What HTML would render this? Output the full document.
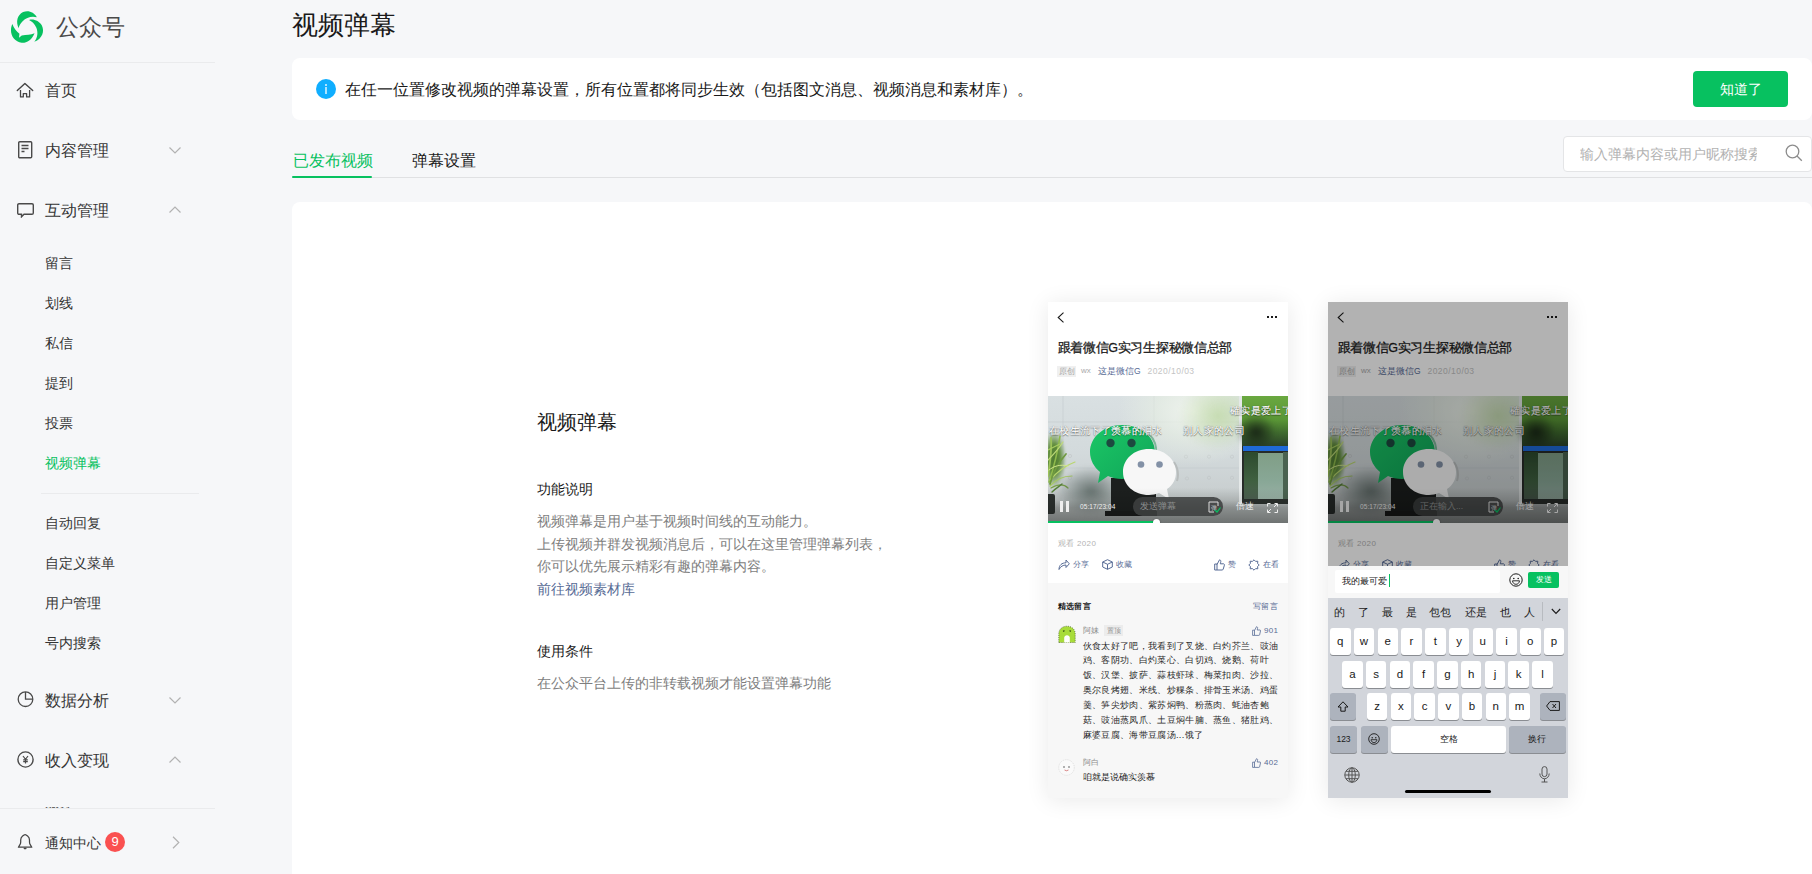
<!DOCTYPE html>
<html><head><meta charset="utf-8">
<style>
*{margin:0;padding:0;box-sizing:border-box}
html,body{width:1812px;height:874px;overflow:hidden;background:#f6f7f9;font-family:"Liberation Sans",sans-serif;color:#353535}
.abs{position:absolute}
.t{position:absolute;white-space:nowrap;line-height:1}
/* sidebar */
.logo{left:11px;top:11px;width:32px;height:32px}
.brand{left:56px;top:16px;font-size:23px;color:#4a4a4a}
.sep{position:absolute;height:1px;background:#eaebed}
.mi{position:absolute;margin-top:1px;left:45px;font-size:16px;color:#353535;line-height:1}
.si{position:absolute;margin-top:1px;left:45px;font-size:14px;color:#353535;line-height:1}
.ico{position:absolute}
.chev{position:absolute;left:169px;width:12px;height:7px}
/* main */
.title{left:292px;top:12px;font-size:26px;color:#1a1a1a}
.card{position:absolute;background:#fff;border-radius:8px}
.btn{position:absolute;left:1693px;top:71px;width:95px;height:36px;background:#07c160;border-radius:4px;color:#fff;font-size:14px;text-align:center;line-height:36px;font-weight:500}
.phone{position:absolute;width:240px;height:496px;overflow:hidden;box-shadow:0 2px 22px rgba(0,0,0,.09)}
.vid{position:absolute;left:0;top:0;width:240px;height:127px;overflow:hidden}
.dm{color:#fff;-webkit-text-stroke:.15px #fff;text-shadow:0 0 1px rgba(0,0,0,.75),0 .5px 1px rgba(0,0,0,.4)}
.cm{font-size:9.3px;letter-spacing:.31px;line-height:14.9px;color:#2a2a2a;white-space:nowrap}
.key{position:absolute;height:26.5px;border-radius:3px;box-shadow:0 1px 0 #8a8d92;color:#1a1a1a;text-align:center;line-height:26.5px;display:flex;align-items:center;justify-content:center}
</style></head><body>

<!-- sidebar -->
<svg class="abs" style="left:8px;top:8px" width="40" height="40" viewBox="0 0 874 874"><g fill="#07c160"><path d="M230,440 C170,300 200,160 330,90 C440,40 570,90 630,200 C520,170 400,200 320,290 C270,340 240,400 230,440 Z"/><path d="M460,260 C560,230 680,280 740,380 C800,500 760,660 575,740 C650,640 660,540 620,430 C580,340 520,290 460,260 Z"/><path d="M95,350 C130,440 180,510 250,560 L240,650 L300,600 C400,580 500,590 580,550 C520,700 400,770 300,760 C160,740 60,620 65,480 C65,430 80,380 95,350 Z"/></g></svg>
<div class="t brand">公众号</div>
<div class="sep" style="left:0;top:62px;width:215px"></div>

<svg class="ico" style="left:16px;top:82px" width="18" height="17" viewBox="0 0 18 17"><path d="M1.3 8.6 L8.9 1.5 L16.7 8.6" fill="none" stroke="#454545" stroke-width="1.4" stroke-linejoin="round" stroke-linecap="round"/><path d="M4.5 8 V14.9 H7.3 V11.6 H10.6 V14.9 H13.6 V8" fill="none" stroke="#454545" stroke-width="1.3" stroke-linejoin="round"/></svg>
<div class="mi" style="top:82px">首页</div>

<svg class="ico" style="left:18px;top:141px" width="15" height="18" viewBox="0 0 15 18"><rect x="0.7" y="0.7" width="13" height="16" rx="1" fill="none" stroke="#4a4a4a" stroke-width="1.4"/><path d="M3.5 4.5H10.5M3.5 7.5H10.5M3.5 10.5H6.5" stroke="#4a4a4a" stroke-width="1.4"/></svg>
<div class="mi" style="top:142px">内容管理</div>
<svg class="chev" style="top:147px" viewBox="0 0 12 7"><path d="M0.5 0.5L6 6L11.5 0.5" fill="none" stroke="#b2b2b2" stroke-width="1.2"/></svg>

<svg class="ico" style="left:17px;top:203px" width="17" height="15" viewBox="0 0 17 15"><path d="M2 0.7H15A1.3 1.3 0 0 1 16.3 2V10A1.3 1.3 0 0 1 15 11.3H7L4.5 13.8V11.3H2A1.3 1.3 0 0 1 0.7 10V2A1.3 1.3 0 0 1 2 0.7Z" fill="none" stroke="#4a4a4a" stroke-width="1.4"/></svg>
<div class="mi" style="top:202px">互动管理</div>
<svg class="chev" style="top:206px" viewBox="0 0 12 7"><path d="M0.5 6.5L6 1L11.5 6.5" fill="none" stroke="#b2b2b2" stroke-width="1.2"/></svg>

<div class="si" style="top:255px">留言</div>
<div class="si" style="top:295px">划线</div>
<div class="si" style="top:335px">私信</div>
<div class="si" style="top:375px">提到</div>
<div class="si" style="top:415px">投票</div>
<div class="si" style="top:455px;color:#07c160">视频弹幕</div>
<div class="sep" style="left:41px;top:493px;width:158px;background:#eaebed"></div>
<div class="si" style="top:515px">自动回复</div>
<div class="si" style="top:555px">自定义菜单</div>
<div class="si" style="top:595px">用户管理</div>
<div class="si" style="top:635px">号内搜索</div>

<svg class="ico" style="left:17px;top:691px" width="17" height="17" viewBox="0 0 17 17"><circle cx="8.5" cy="8.2" r="7.3" fill="none" stroke="#4a4a4a" stroke-width="1.3"/><path d="M8.5 0.9V8.2H15.8" fill="none" stroke="#4a4a4a" stroke-width="1.3"/></svg>
<div class="mi" style="top:692px">数据分析</div>
<svg class="chev" style="top:697px" viewBox="0 0 12 7"><path d="M0.5 0.5L6 6L11.5 0.5" fill="none" stroke="#b2b2b2" stroke-width="1.2"/></svg>
<svg class="ico" style="left:17px;top:751px" width="17" height="17" viewBox="0 0 17 17"><circle cx="8.5" cy="8.5" r="7.6" fill="none" stroke="#4a4a4a" stroke-width="1.4"/><path d="M6 5L8.5 8.3L11 5M8.5 8.3V12.5M6.2 8.8H10.8M6.2 10.6H10.8" fill="none" stroke="#4a4a4a" stroke-width="1.2"/></svg>
<div class="mi" style="top:752px">收入变现</div>
<svg class="chev" style="top:756px" viewBox="0 0 12 7"><path d="M0.5 6.5L6 1L11.5 6.5" fill="none" stroke="#b2b2b2" stroke-width="1.2"/></svg>
<div class="abs" style="left:40px;top:806.5px;width:40px;height:1.5px;overflow:hidden"><div class="t" style="left:5px;top:-11.5px;font-size:14px;color:#555">服务</div></div>
<div class="sep" style="left:0;top:808px;width:215px"></div>
<svg class="ico" style="left:17px;top:834px" width="17" height="17" viewBox="0 0 17 17"><path d="M1.4 13.2L3.1 10.4Q3.7 9.4 3.7 8V5.9Q3.7 3.6 5.6 2.1L7.1 1Q8.1 0.3 9.1 1L10.6 2.1Q12.5 3.6 12.5 5.9V8Q12.5 9.4 13.1 10.4L14.8 13.2Z" fill="none" stroke="#454545" stroke-width="1.25" stroke-linejoin="round"/><path d="M7.4 14.5H8.8" stroke="#454545" stroke-width="1.6" stroke-linecap="round"/></svg>
<div class="si" style="top:835px">通知中心</div>
<div class="abs" style="left:105px;top:832px;width:20px;height:20px;border-radius:10px;background:#fa5151;color:#fff;font-size:13px;text-align:center;line-height:20px">9</div>
<svg class="abs" style="left:172px;top:836px" width="8" height="13" viewBox="0 0 8 13"><path d="M1 0.8L6.8 6.5L1 12.2" fill="none" stroke="#b2b2b2" stroke-width="1.2"/></svg>

<!-- main -->
<div class="t title">视频弹幕</div>
<div class="card" style="left:292px;top:58px;width:1520px;height:62px"></div>
<div class="abs" style="left:316px;top:79px;width:20px;height:20px;border-radius:10px;background:#10aeff"></div>
<div class="abs" style="left:324.7px;top:84px;width:2px;height:1.8px;background:#fff;opacity:.65"></div>
<div class="abs" style="left:324.7px;top:87.2px;width:2px;height:6.8px;background:#fff;opacity:.65"></div>
<div class="t" style="left:345px;top:82px;font-size:16px;color:#1a1a1a">在任一位置修改视频的弹幕设置，所有位置都将同步生效（包括图文消息、视频消息和素材库）。</div>
<div class="btn">知道了</div>

<div class="t" style="left:293px;top:153px;font-size:16px;color:#07c160">已发布视频</div>
<div class="t" style="left:412px;top:153px;font-size:16px;color:#1a1a1a">弹幕设置</div>
<div class="abs" style="left:292px;top:177px;width:1520px;height:1px;background:#e0e1e3"></div>
<div class="abs" style="left:292px;top:175.5px;width:80px;height:2.5px;background:#07c160;border-radius:1px"></div>

<div class="abs" style="left:1563px;top:136px;width:249px;height:36px;border:1px solid #e4e5e7;border-radius:4px;background:#fff;overflow:hidden"></div>
<div class="abs" style="left:1580px;top:144px;width:177px;height:20px;overflow:hidden"><div class="t" style="left:0;top:3px;font-size:14px;color:#b2b2b2">输入弹幕内容或用户昵称搜索</div></div>
<svg class="abs" style="left:1784.5px;top:143.5px" width="18" height="18" viewBox="0 0 18 18"><circle cx="7.5" cy="7.5" r="6.3" fill="none" stroke="#8c8c8c" stroke-width="1.3"/><path d="M12 12L16.8 16.8" stroke="#8c8c8c" stroke-width="1.3"/></svg>

<div class="card" style="left:292px;top:202px;width:1520px;height:700px"></div>

<div class="t" style="left:537px;top:412px;font-size:20px;color:#1a1a1a">视频弹幕</div>
<div class="t" style="left:537px;top:482px;font-size:14px;color:#1a1a1a">功能说明</div>
<div class="abs" style="left:537px;top:510px;font-size:14px;line-height:22.5px;color:#7e7e7e;white-space:nowrap">视频弹幕是用户基于视频时间线的互动能力。<br>上传视频并群发视频消息后，可以在这里管理弹幕列表，<br>你可以优先展示精彩有趣的弹幕内容。<br><span style="color:#576b95">前往视频素材库</span></div>
<div class="t" style="left:537px;top:644px;font-size:14px;color:#1a1a1a">使用条件</div>
<div class="t" style="left:537px;top:676px;font-size:14px;color:#7e7e7e">在公众平台上传的非转载视频才能设置弹幕功能</div>


<!--PHONES--><div class="phone" style="left:1048px;top:302px">
 <div class="abs" style="left:0;top:0;width:240px;height:281px;background:#fff"></div>
 <div class="abs" style="left:0;top:281px;width:240px;height:215px;background:#f7f7f7"></div>
 <svg class="abs" style="left:9px;top:9.5px" width="8" height="11" viewBox="0 0 8 11"><path d="M6.5 0.7L1.2 5.5L6.5 10.3" fill="none" stroke="#1a1a1a" stroke-width="1.1"/></svg>
 <div class="abs" style="left:219px;top:14px;width:2px;height:2px;background:#1a1a1a;box-shadow:4px 0 0 #1a1a1a,8px 0 0 #1a1a1a"></div>
 <div class="t" style="left:9.5px;top:39.5px;font-size:12.5px;color:#1a1a1a;letter-spacing:-.3px;-webkit-text-stroke:.3px #1a1a1a">跟着微信G实习生探秘微信总部</div>
 <div class="abs" style="left:9px;top:64px;width:19px;height:10.5px;background:#f0f0f0"></div>
 <div class="t" style="left:11px;top:65.5px;font-size:7.5px;color:#a8a8a8">原创</div>
 <div class="t" style="left:33px;top:65px;font-size:8px;color:#aaaaaa">wx</div>
 <div class="t" style="left:50px;top:64.5px;font-size:8.5px;color:#576b95">这是微信G</div>
 <div class="t" style="left:99.5px;top:65px;font-size:8.5px;color:#c4c4c4;letter-spacing:.45px">2020/10/03</div>
 <div class="abs" style="left:0;top:94px"><div class="vid">
 <div class="abs" style="left:0;top:0;width:240px;height:127px;background:linear-gradient(180deg,#d9e0e2 0%,#d3dadc 45%,#cad0d1 72%,#bcc2c2 82%,#9ea3a2 88%,#8e9392 100%)"></div>
 <svg class="abs" style="left:0;top:0" width="240" height="127" viewBox="0 0 240 127"><path d="M15 0V105M106 0V105M0 72H191M0 26H191" stroke="#c3cacc" stroke-width=".6"/><circle cx="138" cy="38" r="1.6" fill="none" stroke="#c0c5c6" stroke-width=".6"/><circle cx="161" cy="38" r="1.6" fill="none" stroke="#c0c5c6" stroke-width=".6"/><circle cx="184" cy="38" r="1.6" fill="none" stroke="#c0c5c6" stroke-width=".6"/><circle cx="138" cy="60.7" r="1.6" fill="none" stroke="#c0c5c6" stroke-width=".6"/><circle cx="161" cy="60.7" r="1.6" fill="none" stroke="#c0c5c6" stroke-width=".6"/><circle cx="184" cy="60.7" r="1.6" fill="none" stroke="#c0c5c6" stroke-width=".6"/><circle cx="139" cy="82.5" r="1.6" fill="none" stroke="#c0c5c6" stroke-width=".6"/><circle cx="161" cy="81.8" r="1.6" fill="none" stroke="#c0c5c6" stroke-width=".6"/><circle cx="184" cy="81.8" r="1.6" fill="none" stroke="#c0c5c6" stroke-width=".6"/><circle cx="22" cy="60" r="1.6" fill="none" stroke="#c0c5c6" stroke-width=".6"/><circle cx="22" cy="82" r="1.6" fill="none" stroke="#c0c5c6" stroke-width=".6"/></svg>
 <div class="abs" style="left:70px;top:-40px;width:150px;height:110px;border-radius:50%;background:radial-gradient(closest-side,rgba(240,245,238,.95),rgba(232,240,228,.6) 50%,rgba(225,235,220,0));"></div>
 <div class="abs" style="left:130px;top:-15px;width:80px;height:70px;border-radius:50%;background:radial-gradient(closest-side,rgba(160,200,115,.45),rgba(160,200,115,0));filter:blur(2px)"></div>
 <div class="abs" style="left:191px;top:0;width:3px;height:108px;background:#e4e8e8"></div>
 <div class="abs" style="left:194px;top:0;width:46px;height:108px;background:linear-gradient(180deg,#6aa840 0%,#5a9636 22%,#3f6a2e 34%,#2f4a2a 44%,#2a352e 52%,#3a4a40 100%)"></div>
 <div class="abs" style="left:188px;top:18px;width:40px;height:36px;border-radius:50%;background:radial-gradient(closest-side,rgba(18,26,18,.85),rgba(18,26,18,0));filter:blur(2px)"></div>
 <div class="abs" style="left:194px;top:50px;width:46px;height:58px;background:#272c29"></div><div class="abs" style="left:195px;top:49.5px;width:45px;height:5.5px;background:#1f6ad8"></div>
 <div class="abs" style="left:196px;top:56px;width:14px;height:48px;background:linear-gradient(180deg,#2c4a2e,#3f6040 60%,#4d6052)"></div>
 <div class="abs" style="left:210px;top:57px;width:25px;height:46px;background:linear-gradient(180deg,#809e86,#88a796 60%,#98b0a4)"></div>
 <div class="abs" style="left:235px;top:56px;width:5px;height:48px;background:#4a6250"></div>
 <div class="abs" style="left:194px;top:103px;width:46px;height:5px;background:#2b302d"></div>
 <div class="abs" style="left:-6px;top:34px;width:24px;height:58px;border-radius:50%;background:radial-gradient(closest-side,#4f7a34 0%,#5f8c3a 50%,rgba(90,130,60,0) 100%);filter:blur(1px)"></div>
 <svg class="abs" style="left:0;top:34px;filter:blur(.35px)" width="32" height="66" viewBox="0 0 32 66"><g fill="none" stroke-linecap="round"><path d="M1 52C5 40 9 26 12 6" stroke="#8fba4c" stroke-width="1.6"/><path d="M2 50C9 42 16 36 27 32" stroke="#b9d66e" stroke-width="1.2"/><path d="M2 56C9 48 16 46 24 46" stroke="#a9cc60" stroke-width="1.2"/><path d="M0 46C2 34 4 22 3 8" stroke="#9cc25a" stroke-width="1.8"/><path d="M3 58C10 54 16 54 20 58" stroke="#7aa248" stroke-width="1.2"/><path d="M0 30C6 24 10 20 15 12" stroke="#c0da7a" stroke-width="1.2"/><path d="M2 54C5 42 9 34 18 24" stroke="#6f9a40" stroke-width="1.8"/><path d="M0 20C4 18 8 16 12 14" stroke="#a8cb62" stroke-width="1.2"/><path d="M1 40C6 36 12 34 20 36" stroke="#d2e68c" stroke-width="1"/><path d="M4 62C8 58 12 56 14 54" stroke="#557f38" stroke-width="1.4"/></g></svg>
 <div class="abs" style="left:8px;top:70px;width:70px;height:50px;border-radius:50%;background:radial-gradient(closest-side,rgba(70,84,80,.75),rgba(70,84,80,0));filter:blur(2px)"></div>
 <div class="abs" style="left:0;top:98px;width:7px;height:20px;background:#2b302e;border-radius:0 2px 2px 0"></div>
 <div class="abs" style="left:63px;top:82px;width:45px;height:37px;background:#1c1f1e"></div>
 <div class="abs" style="left:57px;top:115px;width:52px;height:5px;background:#1a1c1b"></div>
 <svg class="abs" style="left:41px;top:28px" width="70" height="60" viewBox="0 0 70 60"><defs><linearGradient id="gg" x1="0" y1="0" x2="1" y2="1"><stop offset="0" stop-color="#1cc766"/><stop offset="1" stop-color="#0fa458"/></linearGradient></defs><path d="M33 1C52 1 66 13 66 28C66 43 52 55 33 55C28 55 23 54 19 52L9 59L11 48C5 43 1 36 1 28C1 13 15 1 33 1Z" fill="url(#gg)"/><path d="M60 10C66 16 68 22 67 30" stroke="#7fb59a" stroke-width="2" fill="none"/><circle cx="21.5" cy="19" r="4.2" fill="#1d4a40"/><circle cx="42.5" cy="19" r="4.2" fill="#1d4a40"/></svg>
 <svg class="abs" style="left:74px;top:52px" width="58" height="52" viewBox="0 0 58 52"><path d="M27 1C42 1 54 11 54 24C54 31 51 37 45 41L47 51L37 45C34 46 30 47 27 47C12 47 1 37 1 24C1 11 12 1 27 1Z" fill="#f7f7f7"/><path d="M52 14C56 20 57 26 55 33" stroke="#b8bcbc" stroke-width="2" fill="none"/><circle cx="19" cy="16.5" r="3.3" fill="#8391a6"/><circle cx="37.5" cy="16.5" r="3.3" fill="#8391a6"/></svg>
 <div class="abs" style="left:0;top:92px;width:240px;height:35px;background:linear-gradient(180deg,rgba(0,0,0,0),rgba(0,0,0,.22))"></div>
 <div class="t dm" style="left:1px;top:29.5px;font-size:10px;letter-spacing:.35px">在校生流下了羡慕的泪水</div>
 <div class="t dm" style="left:135px;top:29.5px;font-size:10px;letter-spacing:.35px">别人家的公司</div>
 <div class="t dm" style="left:182px;top:10px;font-size:10px;letter-spacing:.35px">確实是爱上了</div>
 <div class="abs" style="left:12px;top:105px;width:2.8px;height:10.5px;background:#eee"></div>
 <div class="abs" style="left:18.3px;top:105px;width:2.8px;height:10.5px;background:#eee"></div>
 <div class="t" style="left:32px;top:107.5px;font-size:6.5px;color:#eee;letter-spacing:.1px">05:17/23:04</div>
 <div class="abs" style="left:85px;top:101px;width:90px;height:19px;border-radius:10px;background:rgba(62,64,64,.88)"></div>
 <div class="t" style="left:92px;top:106px;font-size:8.5px;color:#8e9090">发送弹幕</div>
 <svg class="abs" style="left:160px;top:105px" width="13" height="12" viewBox="0 0 13 12"><path d="M1 1H10V5M1 1V11H6" fill="none" stroke="#ddd" stroke-width="1"/><text x="2.5" y="8.5" font-size="6" fill="#ddd">弹</text><path d="M7 9L9 11L12.5 6.5" fill="none" stroke="#07c160" stroke-width="1.2"/></svg>
 <div class="t" style="left:187.5px;top:106px;font-size:8.5px;color:#eee">倍速</div>
 <svg class="abs" style="left:218.5px;top:106.5px" width="11" height="10" viewBox="0 0 11 10"><path d="M0.5 3.5V0.5H3.5M7.5 0.5H10.5V3.5M10.5 6.5V9.5H7.5M3.5 9.5H0.5V6.5M1 9L4 6M10 1L7 4" fill="none" stroke="#eee" stroke-width="1"/></svg>
 <div class="abs" style="left:0;top:125px;width:108px;height:1.8px;background:#07c160"></div>
 <div class="abs" style="left:104.5px;top:122.5px;width:7px;height:7px;border-radius:50%;background:#fff;box-shadow:0 0 2px rgba(0,0,0,.3)"></div>
</div></div>
 <div class="t" style="left:9.5px;top:237.7px;font-size:8px;color:#b4b4b4;letter-spacing:.4px">观看 2020</div>
 <svg class="abs" style="left:10px;top:257.2px" width="12" height="11" viewBox="0 0 12 11"><path d="M1 10.5C1 6 4 3.8 8 3.8V1L11.3 4.8L8 8.5V6C5 6 2.5 7.5 1 10.5Z" fill="none" stroke="#576b95" stroke-width="1"/></svg>
 <div class="t" style="left:25px;top:258.7px;font-size:8px;color:#576b95">分享</div>
 <svg class="abs" style="left:53.5px;top:257.2px" width="11" height="11" viewBox="0 0 11 11"><path d="M5.5 0.7L10.3 3V8L5.5 10.3L0.7 8V3Z M0.7 3L5.5 5.3L10.3 3 M5.5 5.3V10.3" fill="none" stroke="#576b95" stroke-width="1"/></svg>
 <div class="t" style="left:67.5px;top:258.7px;font-size:8px;color:#576b95">收藏</div>
 <svg class="abs" style="left:166px;top:256.7px" width="11" height="12" viewBox="0 0 11 12"><path d="M0.7 5H3V11H0.7Z M3 5.5L5.5 0.8C6.8 1 7 2 6.7 3.2L6.3 4.8H9.5C10.2 4.8 10.6 5.5 10.4 6.2L9.2 10.2C9 10.8 8.6 11 8 11H3" fill="none" stroke="#576b95" stroke-width="1"/></svg>
 <div class="t" style="left:180px;top:258.7px;font-size:8px;color:#576b95">赞</div>
 <svg class="abs" style="left:200px;top:256.7px" width="12" height="12" viewBox="0 0 12 12"><path d="M6 0.8L7.6 2.4L9.8 2.2L9.6 4.4L11.2 6L9.6 7.6L9.8 9.8L7.6 9.6L6 11.2L4.4 9.6L2.2 9.8L2.4 7.6L0.8 6L2.4 4.4L2.2 2.2L4.4 2.4Z" fill="none" stroke="#576b95" stroke-width="1"/></svg>
 <div class="t" style="left:215px;top:258.7px;font-size:8px;color:#576b95">在看</div>
 <div class="t" style="left:9.5px;top:301px;font-size:8px;font-weight:bold;color:#1a1a1a;letter-spacing:.4px">精选留言</div>
 <div class="t" style="left:205px;top:301px;font-size:8px;color:#576b95;letter-spacing:.4px">写留言</div>
 <svg class="abs" style="left:9.5px;top:323px" width="18" height="18" viewBox="0 0 18 18"><path d="M0.8 17.5V9C0.8 4 4.5 1.2 9 1.2C13.5 1.2 17.2 4 17.2 9V17.5Z" fill="#a8dc3a" stroke="#2a3a10" stroke-width=".6" stroke-dasharray="1 1.2"/><path d="M5 6.3L6.5 5.8M11.5 5.8L13 6.3" stroke="#1a2a0a" stroke-width="1.1"/><path d="M6.2 17.5V12.8C6.2 11.3 7.5 10.3 9 10.3C10.5 10.3 11.8 11.3 11.8 12.8V17.5Z" fill="#fff"/></svg>
 <div class="t" style="left:35px;top:325px;font-size:8px;color:#8a8a8a">阿妹</div>
 <div class="abs" style="left:55.8px;top:323px;width:19px;height:11px;background:#ececec"></div>
 <div class="t" style="left:58.5px;top:325px;font-size:7px;color:#8e8e8e">置顶</div>
 <svg class="abs" style="left:204px;top:324px" width="9" height="10" viewBox="0 0 9 10"><path d="M0.6 4.2H2.5V9.4H0.6Z M2.5 4.5L4.5 0.7C5.6 0.9 5.8 1.6 5.5 2.6L5.2 4H8C8.5 4 8.7 4.5 8.5 5L7.6 8.8C7.5 9.2 7.2 9.4 6.8 9.4H2.5" fill="none" stroke="#576b95" stroke-width=".8"/></svg>
 <div class="t" style="left:216px;top:325px;font-size:8px;color:#576b95;letter-spacing:.3px">901</div>
 <div class="abs cm" style="left:34.8px;top:336.5px">伙食太好了吧，我看到了叉烧、白灼芥兰、豉油<br>鸡、客阴功、白灼菜心、白切鸡、烧鹅、荷叶<br>饭、汉堡、披萨、蒜枝虾球、梅菜扣肉、沙拉、<br>奥尔良烤翅、米线、炒粿条、排骨玉米汤、鸡蛋<br>羹、笋尖炒肉、紫苏焖鸭、粉蒸肉、蚝油杏鲍<br>菇、豉油蒸凤爪、土豆焖牛腩、蒸鱼、猪肚鸡、<br>麻婆豆腐、海带豆腐汤...饿了</div>
 <svg class="abs" style="left:10px;top:455.5px" width="17" height="19" viewBox="0 0 17 19"><circle cx="8.5" cy="9.5" r="7.8" fill="#fafafa" stroke="#d0d0d0" stroke-width=".6" stroke-dasharray="1.2 1"/><circle cx="6" cy="9" r=".8" fill="#555"/><circle cx="11" cy="9" r=".8" fill="#555"/><path d="M6.5 12Q8.5 13.5 10.5 12" stroke="#c55" stroke-width=".7" fill="none"/></svg>
 <div class="t" style="left:35px;top:457px;font-size:8px;color:#8a8a8a">阿白</div>
 <svg class="abs" style="left:204px;top:456px" width="9" height="10" viewBox="0 0 9 10"><path d="M0.6 4.2H2.5V9.4H0.6Z M2.5 4.5L4.5 0.7C5.6 0.9 5.8 1.6 5.5 2.6L5.2 4H8C8.5 4 8.7 4.5 8.5 5L7.6 8.8C7.5 9.2 7.2 9.4 6.8 9.4H2.5" fill="none" stroke="#576b95" stroke-width=".8"/></svg>
 <div class="t" style="left:216px;top:457px;font-size:8px;color:#576b95;letter-spacing:.3px">402</div>
 <div class="t" style="left:34.8px;top:471px;font-size:9.3px;color:#1a1a1a">咱就是说确实羡慕</div>
</div>
<div class="phone" style="left:1328px;top:302px">
 <div class="abs" style="left:0;top:0;width:240px;height:281px;background:#fff"></div>
 <div class="abs" style="left:0;top:281px;width:240px;height:215px;background:#f7f7f7"></div>
 <svg class="abs" style="left:9px;top:9.5px" width="8" height="11" viewBox="0 0 8 11"><path d="M6.5 0.7L1.2 5.5L6.5 10.3" fill="none" stroke="#1a1a1a" stroke-width="1.1"/></svg>
 <div class="abs" style="left:219px;top:14px;width:2px;height:2px;background:#1a1a1a;box-shadow:4px 0 0 #1a1a1a,8px 0 0 #1a1a1a"></div>
 <div class="t" style="left:9.5px;top:39.5px;font-size:12.5px;color:#1a1a1a;letter-spacing:-.3px;-webkit-text-stroke:.3px #1a1a1a">跟着微信G实习生探秘微信总部</div>
 <div class="abs" style="left:9px;top:64px;width:19px;height:10.5px;background:#f0f0f0"></div>
 <div class="t" style="left:11px;top:65.5px;font-size:7.5px;color:#a8a8a8">原创</div>
 <div class="t" style="left:33px;top:65px;font-size:8px;color:#aaaaaa">wx</div>
 <div class="t" style="left:50px;top:64.5px;font-size:8.5px;color:#576b95">这是微信G</div>
 <div class="t" style="left:99.5px;top:65px;font-size:8.5px;color:#c4c4c4;letter-spacing:.45px">2020/10/03</div>
 <div class="abs" style="left:0;top:94px"><div class="vid">
 <div class="abs" style="left:0;top:0;width:240px;height:127px;background:linear-gradient(180deg,#d9e0e2 0%,#d3dadc 45%,#cad0d1 72%,#bcc2c2 82%,#9ea3a2 88%,#8e9392 100%)"></div>
 <svg class="abs" style="left:0;top:0" width="240" height="127" viewBox="0 0 240 127"><path d="M15 0V105M106 0V105M0 72H191M0 26H191" stroke="#c3cacc" stroke-width=".6"/><circle cx="138" cy="38" r="1.6" fill="none" stroke="#c0c5c6" stroke-width=".6"/><circle cx="161" cy="38" r="1.6" fill="none" stroke="#c0c5c6" stroke-width=".6"/><circle cx="184" cy="38" r="1.6" fill="none" stroke="#c0c5c6" stroke-width=".6"/><circle cx="138" cy="60.7" r="1.6" fill="none" stroke="#c0c5c6" stroke-width=".6"/><circle cx="161" cy="60.7" r="1.6" fill="none" stroke="#c0c5c6" stroke-width=".6"/><circle cx="184" cy="60.7" r="1.6" fill="none" stroke="#c0c5c6" stroke-width=".6"/><circle cx="139" cy="82.5" r="1.6" fill="none" stroke="#c0c5c6" stroke-width=".6"/><circle cx="161" cy="81.8" r="1.6" fill="none" stroke="#c0c5c6" stroke-width=".6"/><circle cx="184" cy="81.8" r="1.6" fill="none" stroke="#c0c5c6" stroke-width=".6"/><circle cx="22" cy="60" r="1.6" fill="none" stroke="#c0c5c6" stroke-width=".6"/><circle cx="22" cy="82" r="1.6" fill="none" stroke="#c0c5c6" stroke-width=".6"/></svg>
 <div class="abs" style="left:70px;top:-40px;width:150px;height:110px;border-radius:50%;background:radial-gradient(closest-side,rgba(240,245,238,.95),rgba(232,240,228,.6) 50%,rgba(225,235,220,0));"></div>
 <div class="abs" style="left:130px;top:-15px;width:80px;height:70px;border-radius:50%;background:radial-gradient(closest-side,rgba(160,200,115,.45),rgba(160,200,115,0));filter:blur(2px)"></div>
 <div class="abs" style="left:191px;top:0;width:3px;height:108px;background:#e4e8e8"></div>
 <div class="abs" style="left:194px;top:0;width:46px;height:108px;background:linear-gradient(180deg,#6aa840 0%,#5a9636 22%,#3f6a2e 34%,#2f4a2a 44%,#2a352e 52%,#3a4a40 100%)"></div>
 <div class="abs" style="left:188px;top:18px;width:40px;height:36px;border-radius:50%;background:radial-gradient(closest-side,rgba(18,26,18,.85),rgba(18,26,18,0));filter:blur(2px)"></div>
 <div class="abs" style="left:194px;top:50px;width:46px;height:58px;background:#272c29"></div><div class="abs" style="left:195px;top:49.5px;width:45px;height:5.5px;background:#1f6ad8"></div>
 <div class="abs" style="left:196px;top:56px;width:14px;height:48px;background:linear-gradient(180deg,#2c4a2e,#3f6040 60%,#4d6052)"></div>
 <div class="abs" style="left:210px;top:57px;width:25px;height:46px;background:linear-gradient(180deg,#809e86,#88a796 60%,#98b0a4)"></div>
 <div class="abs" style="left:235px;top:56px;width:5px;height:48px;background:#4a6250"></div>
 <div class="abs" style="left:194px;top:103px;width:46px;height:5px;background:#2b302d"></div>
 <div class="abs" style="left:-6px;top:34px;width:24px;height:58px;border-radius:50%;background:radial-gradient(closest-side,#4f7a34 0%,#5f8c3a 50%,rgba(90,130,60,0) 100%);filter:blur(1px)"></div>
 <svg class="abs" style="left:0;top:34px;filter:blur(.35px)" width="32" height="66" viewBox="0 0 32 66"><g fill="none" stroke-linecap="round"><path d="M1 52C5 40 9 26 12 6" stroke="#8fba4c" stroke-width="1.6"/><path d="M2 50C9 42 16 36 27 32" stroke="#b9d66e" stroke-width="1.2"/><path d="M2 56C9 48 16 46 24 46" stroke="#a9cc60" stroke-width="1.2"/><path d="M0 46C2 34 4 22 3 8" stroke="#9cc25a" stroke-width="1.8"/><path d="M3 58C10 54 16 54 20 58" stroke="#7aa248" stroke-width="1.2"/><path d="M0 30C6 24 10 20 15 12" stroke="#c0da7a" stroke-width="1.2"/><path d="M2 54C5 42 9 34 18 24" stroke="#6f9a40" stroke-width="1.8"/><path d="M0 20C4 18 8 16 12 14" stroke="#a8cb62" stroke-width="1.2"/><path d="M1 40C6 36 12 34 20 36" stroke="#d2e68c" stroke-width="1"/><path d="M4 62C8 58 12 56 14 54" stroke="#557f38" stroke-width="1.4"/></g></svg>
 <div class="abs" style="left:8px;top:70px;width:70px;height:50px;border-radius:50%;background:radial-gradient(closest-side,rgba(70,84,80,.75),rgba(70,84,80,0));filter:blur(2px)"></div>
 <div class="abs" style="left:0;top:98px;width:7px;height:20px;background:#2b302e;border-radius:0 2px 2px 0"></div>
 <div class="abs" style="left:63px;top:82px;width:45px;height:37px;background:#1c1f1e"></div>
 <div class="abs" style="left:57px;top:115px;width:52px;height:5px;background:#1a1c1b"></div>
 <svg class="abs" style="left:41px;top:28px" width="70" height="60" viewBox="0 0 70 60"><defs><linearGradient id="gg" x1="0" y1="0" x2="1" y2="1"><stop offset="0" stop-color="#1cc766"/><stop offset="1" stop-color="#0fa458"/></linearGradient></defs><path d="M33 1C52 1 66 13 66 28C66 43 52 55 33 55C28 55 23 54 19 52L9 59L11 48C5 43 1 36 1 28C1 13 15 1 33 1Z" fill="url(#gg)"/><path d="M60 10C66 16 68 22 67 30" stroke="#7fb59a" stroke-width="2" fill="none"/><circle cx="21.5" cy="19" r="4.2" fill="#1d4a40"/><circle cx="42.5" cy="19" r="4.2" fill="#1d4a40"/></svg>
 <svg class="abs" style="left:74px;top:52px" width="58" height="52" viewBox="0 0 58 52"><path d="M27 1C42 1 54 11 54 24C54 31 51 37 45 41L47 51L37 45C34 46 30 47 27 47C12 47 1 37 1 24C1 11 12 1 27 1Z" fill="#f7f7f7"/><path d="M52 14C56 20 57 26 55 33" stroke="#b8bcbc" stroke-width="2" fill="none"/><circle cx="19" cy="16.5" r="3.3" fill="#8391a6"/><circle cx="37.5" cy="16.5" r="3.3" fill="#8391a6"/></svg>
 <div class="abs" style="left:0;top:92px;width:240px;height:35px;background:linear-gradient(180deg,rgba(0,0,0,0),rgba(0,0,0,.22))"></div>
 <div class="t dm" style="left:1px;top:29.5px;font-size:10px;letter-spacing:.35px">在校生流下了羡慕的泪水</div>
 <div class="t dm" style="left:135px;top:29.5px;font-size:10px;letter-spacing:.35px">别人家的公司</div>
 <div class="t dm" style="left:182px;top:10px;font-size:10px;letter-spacing:.35px">確实是爱上了</div>
 <div class="abs" style="left:12px;top:105px;width:2.8px;height:10.5px;background:#eee"></div>
 <div class="abs" style="left:18.3px;top:105px;width:2.8px;height:10.5px;background:#eee"></div>
 <div class="t" style="left:32px;top:107.5px;font-size:6.5px;color:#eee;letter-spacing:.1px">05:17/23:04</div>
 <div class="abs" style="left:85px;top:101px;width:90px;height:19px;border-radius:10px;background:rgba(62,64,64,.88)"></div>
 <div class="t" style="left:92px;top:106px;font-size:8.5px;color:#8e9090">正在输入...</div>
 <svg class="abs" style="left:160px;top:105px" width="13" height="12" viewBox="0 0 13 12"><path d="M1 1H10V5M1 1V11H6" fill="none" stroke="#ddd" stroke-width="1"/><text x="2.5" y="8.5" font-size="6" fill="#ddd">弹</text><path d="M7 9L9 11L12.5 6.5" fill="none" stroke="#07c160" stroke-width="1.2"/></svg>
 <div class="t" style="left:187.5px;top:106px;font-size:8.5px;color:#eee">倍速</div>
 <svg class="abs" style="left:218.5px;top:106.5px" width="11" height="10" viewBox="0 0 11 10"><path d="M0.5 3.5V0.5H3.5M7.5 0.5H10.5V3.5M10.5 6.5V9.5H7.5M3.5 9.5H0.5V6.5M1 9L4 6M10 1L7 4" fill="none" stroke="#eee" stroke-width="1"/></svg>
 <div class="abs" style="left:0;top:125px;width:108px;height:1.8px;background:#07c160"></div>
 <div class="abs" style="left:104.5px;top:122.5px;width:7px;height:7px;border-radius:50%;background:#fff;box-shadow:0 0 2px rgba(0,0,0,.3)"></div>
</div></div>
 <div class="t" style="left:9.5px;top:237.7px;font-size:8px;color:#b4b4b4;letter-spacing:.4px">观看 2020</div>
 <svg class="abs" style="left:10px;top:257.2px" width="12" height="11" viewBox="0 0 12 11"><path d="M1 10.5C1 6 4 3.8 8 3.8V1L11.3 4.8L8 8.5V6C5 6 2.5 7.5 1 10.5Z" fill="none" stroke="#576b95" stroke-width="1"/></svg>
 <div class="t" style="left:25px;top:258.7px;font-size:8px;color:#576b95">分享</div>
 <svg class="abs" style="left:53.5px;top:257.2px" width="11" height="11" viewBox="0 0 11 11"><path d="M5.5 0.7L10.3 3V8L5.5 10.3L0.7 8V3Z M0.7 3L5.5 5.3L10.3 3 M5.5 5.3V10.3" fill="none" stroke="#576b95" stroke-width="1"/></svg>
 <div class="t" style="left:67.5px;top:258.7px;font-size:8px;color:#576b95">收藏</div>
 <svg class="abs" style="left:166px;top:256.7px" width="11" height="12" viewBox="0 0 11 12"><path d="M0.7 5H3V11H0.7Z M3 5.5L5.5 0.8C6.8 1 7 2 6.7 3.2L6.3 4.8H9.5C10.2 4.8 10.6 5.5 10.4 6.2L9.2 10.2C9 10.8 8.6 11 8 11H3" fill="none" stroke="#576b95" stroke-width="1"/></svg>
 <div class="t" style="left:180px;top:258.7px;font-size:8px;color:#576b95">赞</div>
 <svg class="abs" style="left:200px;top:256.7px" width="12" height="12" viewBox="0 0 12 12"><path d="M6 0.8L7.6 2.4L9.8 2.2L9.6 4.4L11.2 6L9.6 7.6L9.8 9.8L7.6 9.6L6 11.2L4.4 9.6L2.2 9.8L2.4 7.6L0.8 6L2.4 4.4L2.2 2.2L4.4 2.4Z" fill="none" stroke="#576b95" stroke-width="1"/></svg>
 <div class="t" style="left:215px;top:258.7px;font-size:8px;color:#576b95">在看</div>
 <div class="t" style="left:9.5px;top:301px;font-size:8px;font-weight:bold;color:#1a1a1a;letter-spacing:.4px">精选留言</div>
 <div class="t" style="left:205px;top:301px;font-size:8px;color:#576b95;letter-spacing:.4px">写留言</div>
 <svg class="abs" style="left:9.5px;top:323px" width="18" height="18" viewBox="0 0 18 18"><path d="M0.8 17.5V9C0.8 4 4.5 1.2 9 1.2C13.5 1.2 17.2 4 17.2 9V17.5Z" fill="#a8dc3a" stroke="#2a3a10" stroke-width=".6" stroke-dasharray="1 1.2"/><path d="M5 6.3L6.5 5.8M11.5 5.8L13 6.3" stroke="#1a2a0a" stroke-width="1.1"/><path d="M6.2 17.5V12.8C6.2 11.3 7.5 10.3 9 10.3C10.5 10.3 11.8 11.3 11.8 12.8V17.5Z" fill="#fff"/></svg>
 <div class="t" style="left:35px;top:325px;font-size:8px;color:#8a8a8a">阿妹</div>
 <div class="abs" style="left:55.8px;top:323px;width:19px;height:11px;background:#ececec"></div>
 <div class="t" style="left:58.5px;top:325px;font-size:7px;color:#8e8e8e">置顶</div>
 <svg class="abs" style="left:204px;top:324px" width="9" height="10" viewBox="0 0 9 10"><path d="M0.6 4.2H2.5V9.4H0.6Z M2.5 4.5L4.5 0.7C5.6 0.9 5.8 1.6 5.5 2.6L5.2 4H8C8.5 4 8.7 4.5 8.5 5L7.6 8.8C7.5 9.2 7.2 9.4 6.8 9.4H2.5" fill="none" stroke="#576b95" stroke-width=".8"/></svg>
 <div class="t" style="left:216px;top:325px;font-size:8px;color:#576b95;letter-spacing:.3px">901</div>
 <div class="abs cm" style="left:34.8px;top:336.5px">伙食太好了吧，我看到了叉烧、白灼芥兰、豉油<br>鸡、客阴功、白灼菜心、白切鸡、烧鹅、荷叶<br>饭、汉堡、披萨、蒜枝虾球、梅菜扣肉、沙拉、<br>奥尔良烤翅、米线、炒粿条、排骨玉米汤、鸡蛋<br>羹、笋尖炒肉、紫苏焖鸭、粉蒸肉、蚝油杏鲍<br>菇、豉油蒸凤爪、土豆焖牛腩、蒸鱼、猪肚鸡、<br>麻婆豆腐、海带豆腐汤...饿了</div>
 <svg class="abs" style="left:10px;top:455.5px" width="17" height="19" viewBox="0 0 17 19"><circle cx="8.5" cy="9.5" r="7.8" fill="#fafafa" stroke="#d0d0d0" stroke-width=".6" stroke-dasharray="1.2 1"/><circle cx="6" cy="9" r=".8" fill="#555"/><circle cx="11" cy="9" r=".8" fill="#555"/><path d="M6.5 12Q8.5 13.5 10.5 12" stroke="#c55" stroke-width=".7" fill="none"/></svg>
 <div class="t" style="left:35px;top:457px;font-size:8px;color:#8a8a8a">阿白</div>
 <svg class="abs" style="left:204px;top:456px" width="9" height="10" viewBox="0 0 9 10"><path d="M0.6 4.2H2.5V9.4H0.6Z M2.5 4.5L4.5 0.7C5.6 0.9 5.8 1.6 5.5 2.6L5.2 4H8C8.5 4 8.7 4.5 8.5 5L7.6 8.8C7.5 9.2 7.2 9.4 6.8 9.4H2.5" fill="none" stroke="#576b95" stroke-width=".8"/></svg>
 <div class="t" style="left:216px;top:457px;font-size:8px;color:#576b95;letter-spacing:.3px">402</div>
 <div class="t" style="left:34.8px;top:471px;font-size:9.3px;color:#1a1a1a">咱就是说确实羡慕</div>
<div class="abs" style="left:0;top:0;width:240px;height:264px;background:rgba(0,0,0,.3)"></div>
<div class="abs" style="left:0;top:264px;width:240px;height:31.5px;background:#f7f7f7"></div>
<div class="abs" style="left:6.8px;top:268px;width:165px;height:22.7px;background:#fff;border-radius:2px"></div>
<div class="t" style="left:13.5px;top:275px;font-size:9px;color:#1a1a1a;letter-spacing:.2px">我的最可爱</div>
<div class="abs" style="left:60.5px;top:272px;width:1.2px;height:13px;background:#07c160"></div>
<svg class="abs" style="left:180.5px;top:271px" width="14" height="14" viewBox="0 0 14 14"><circle cx="7" cy="7" r="6.2" fill="none" stroke="#1a1a1a" stroke-width="1"/><circle cx="4.8" cy="5.5" r=".8" fill="#1a1a1a"/><circle cx="9.2" cy="5.5" r=".8" fill="#1a1a1a"/><path d="M3.5 7.8H10.5C10.3 10 8.8 11.3 7 11.3C5.2 11.3 3.7 10 3.5 7.8Z" fill="none" stroke="#1a1a1a" stroke-width=".9"/></svg>
<div class="abs" style="left:200px;top:270px;width:31.2px;height:16px;background:#07c160;border-radius:2px;color:#fff;font-size:8px;line-height:16px;text-align:center">发送</div>
<div class="abs" style="left:0;top:295.5px;width:240px;height:200.5px;background:#d2d5db"></div>
<div class="t" style="left:6px;top:305px;font-size:10.5px;color:#1a1a1a">的</div>
<div class="t" style="left:30px;top:305px;font-size:10.5px;color:#1a1a1a">了</div>
<div class="t" style="left:53.7px;top:305px;font-size:10.5px;color:#1a1a1a">最</div>
<div class="t" style="left:77.5px;top:305px;font-size:10.5px;color:#1a1a1a">是</div>
<div class="t" style="left:101px;top:305px;font-size:10.5px;color:#1a1a1a">包包</div>
<div class="t" style="left:137px;top:305px;font-size:10.5px;color:#1a1a1a">还是</div>
<div class="t" style="left:172px;top:305px;font-size:10.5px;color:#1a1a1a">也</div>
<div class="t" style="left:195.8px;top:305px;font-size:10.5px;color:#1a1a1a">人</div>
<div class="abs" style="left:213.6px;top:299.6px;width:.8px;height:19.5px;background:#b8bbc0"></div>
<svg class="abs" style="left:222.5px;top:305.5px" width="10" height="7" viewBox="0 0 10 7"><path d="M0.8 1L5 5.5L9.2 1" fill="none" stroke="#1a1a1a" stroke-width="1.1"/></svg>
<div class="key" style="left:2.0px;top:326px;width:20.5px;background:#fff;font-size:11.5px">q</div>
<div class="key" style="left:25.75px;top:326px;width:20.5px;background:#fff;font-size:11.5px">w</div>
<div class="key" style="left:49.5px;top:326px;width:20.5px;background:#fff;font-size:11.5px">e</div>
<div class="key" style="left:73.25px;top:326px;width:20.5px;background:#fff;font-size:11.5px">r</div>
<div class="key" style="left:97.0px;top:326px;width:20.5px;background:#fff;font-size:11.5px">t</div>
<div class="key" style="left:120.75px;top:326px;width:20.5px;background:#fff;font-size:11.5px">y</div>
<div class="key" style="left:144.5px;top:326px;width:20.5px;background:#fff;font-size:11.5px">u</div>
<div class="key" style="left:168.25px;top:326px;width:20.5px;background:#fff;font-size:11.5px">i</div>
<div class="key" style="left:192.0px;top:326px;width:20.5px;background:#fff;font-size:11.5px">o</div>
<div class="key" style="left:215.75px;top:326px;width:20.5px;background:#fff;font-size:11.5px">p</div>
<div class="key" style="left:14.2px;top:359px;width:20.5px;background:#fff;font-size:11.5px">a</div>
<div class="key" style="left:37.95px;top:359px;width:20.5px;background:#fff;font-size:11.5px">s</div>
<div class="key" style="left:61.7px;top:359px;width:20.5px;background:#fff;font-size:11.5px">d</div>
<div class="key" style="left:85.45px;top:359px;width:20.5px;background:#fff;font-size:11.5px">f</div>
<div class="key" style="left:109.2px;top:359px;width:20.5px;background:#fff;font-size:11.5px">g</div>
<div class="key" style="left:132.95px;top:359px;width:20.5px;background:#fff;font-size:11.5px">h</div>
<div class="key" style="left:156.7px;top:359px;width:20.5px;background:#fff;font-size:11.5px">j</div>
<div class="key" style="left:180.45px;top:359px;width:20.5px;background:#fff;font-size:11.5px">k</div>
<div class="key" style="left:204.2px;top:359px;width:20.5px;background:#fff;font-size:11.5px">l</div>
<div class="key" style="left:2px;top:391px;width:26px;background:#adb3bd;font-size:11.5px"><svg width="12" height="11" viewBox="0 0 12 11"><path d="M6 0.8L11 6H8.2V10.2H3.8V6H1Z" fill="none" stroke="#1a1a1a" stroke-width="1"/></svg></div>
<div class="key" style="left:38.8px;top:391px;width:20.5px;background:#fff;font-size:11.5px">z</div>
<div class="key" style="left:62.55px;top:391px;width:20.5px;background:#fff;font-size:11.5px">x</div>
<div class="key" style="left:86.3px;top:391px;width:20.5px;background:#fff;font-size:11.5px">c</div>
<div class="key" style="left:110.05px;top:391px;width:20.5px;background:#fff;font-size:11.5px">v</div>
<div class="key" style="left:133.8px;top:391px;width:20.5px;background:#fff;font-size:11.5px">b</div>
<div class="key" style="left:157.55px;top:391px;width:20.5px;background:#fff;font-size:11.5px">n</div>
<div class="key" style="left:181.3px;top:391px;width:20.5px;background:#fff;font-size:11.5px">m</div>
<div class="key" style="left:212px;top:391px;width:25.7px;background:#adb3bd;font-size:11.5px"><svg width="14" height="10" viewBox="0 0 14 10"><path d="M4 0.6H13.4V9.4H4L0.6 5Z M6.5 3L10 7M10 3L6.5 7" fill="none" stroke="#1a1a1a" stroke-width="1"/></svg></div>
<div class="key" style="left:2px;top:424px;width:27px;background:#adb3bd;font-size:8.5px">123</div>
<div class="key" style="left:33px;top:424px;width:26.7px;background:#adb3bd;font-size:11.5px"><svg width="12" height="12" viewBox="0 0 12 12"><circle cx="6" cy="6" r="5.3" fill="none" stroke="#1a1a1a" stroke-width=".9"/><circle cx="4.2" cy="4.7" r=".7" fill="#1a1a1a"/><circle cx="7.8" cy="4.7" r=".7" fill="#1a1a1a"/><path d="M3 6.7H9C8.8 8.6 7.5 9.6 6 9.6C4.5 9.6 3.2 8.6 3 6.7Z" fill="none" stroke="#1a1a1a" stroke-width=".8"/></svg></div>
<div class="key" style="left:63px;top:424px;width:115px;background:#fff;font-size:8.5px">空格</div>
<div class="key" style="left:181px;top:424px;width:56.7px;background:#adb3bd;font-size:8.5px">换行</div>
<svg class="abs" style="left:16px;top:465px" width="16" height="16" viewBox="0 0 16 16"><circle cx="8" cy="8" r="7.2" fill="none" stroke="#555" stroke-width="1"/><ellipse cx="8" cy="8" rx="3.3" ry="7.2" fill="none" stroke="#555" stroke-width="1"/><path d="M0.8 8H15.2M2 4.3H14M2 11.7H14M8 0.8V15.2" stroke="#555" stroke-width="1"/></svg>
<svg class="abs" style="left:210.5px;top:464px" width="11" height="17" viewBox="0 0 11 17"><rect x="3" y="0.6" width="5" height="10" rx="2.5" fill="none" stroke="#555" stroke-width="1"/><path d="M0.8 7.5C0.8 10.5 3 12.8 5.5 12.8C8 12.8 10.2 10.5 10.2 7.5M5.5 12.8V16M2.5 16H8.5" fill="none" stroke="#555" stroke-width="1"/></svg>
<div class="abs" style="left:77px;top:488px;width:86px;height:3px;border-radius:2px;background:#000"></div></div><!--/PHONES-->
</body></html>
